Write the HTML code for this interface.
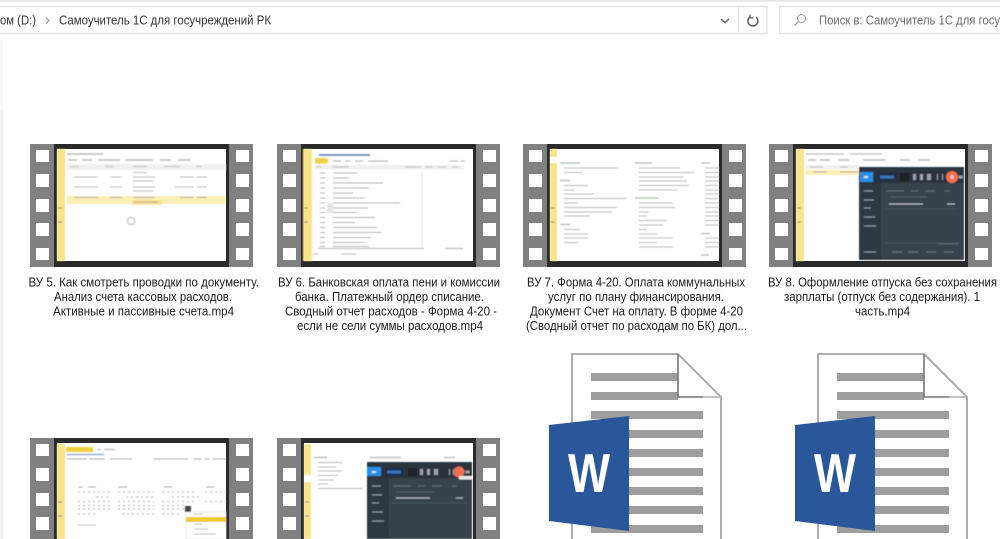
<!DOCTYPE html>
<html lang="ru">
<head>
<meta charset="utf-8">
<title>Самоучитель 1С для госучреждений РК</title>
<style>
html,body{margin:0;padding:0;background:#fff;width:1000px;height:539px;overflow:hidden}
svg{display:block;position:absolute;left:0;top:0}
text{font-family:"Liberation Sans","DejaVu Sans",sans-serif}
.t{font-size:13.2px;fill:#1c1c1c}
.b{font-size:13px;fill:#333}
.s{font-size:13px;fill:#6a6a6a}
</style>
</head>
<body>
<svg width="1000" height="539" viewBox="0 0 1000 539" xmlns="http://www.w3.org/2000/svg">
<defs>
<filter id="bl" x="-5%" y="-5%" width="110%" height="110%"><feGaussianBlur stdDeviation="0.65"/></filter>
<filter id="bs" x="-5%" y="-5%" width="110%" height="110%"><feGaussianBlur stdDeviation="0.28"/></filter>
<g id="film">
<rect x="0" y="0" width="223" height="123" fill="#808080"/>
<rect x="24" y="0" width="175" height="123" fill="#2a2a2a"/>
<path fill="#fff" d="M6 6h13v12H6zM6 30h13v13H6zM6 55h13v13H6zM6 79h13v13H6zM6 104h13v12H6zM206 6h13v12h-13zM206 30h13v13h-13zM206 55h13v13h-13zM206 79h13v13h-13zM206 104h13v12h-13z"/>
<rect x="27" y="5" width="169" height="112" fill="#fff"/>
</g>
<g id="doc">
<path d="M0 0H106L149 43V190H0Z" fill="#fff"/>
<path d="M19 19h87v8H19zM19 38h87v8H19zM19 57h112v8H19zM19 76h112v8H19zM19 95h112v8H19zM19 114h112v8H19zM19 133h112v8H19zM19 152h112v8H19zM19 171h112v8H19z" fill="#9e9e9e"/>
<path d="M0 190V0H106L149 43V190" fill="none" stroke="#aeaeae" stroke-width="2"/>
<path d="M106 0V43H131" fill="none" stroke="#777" stroke-width="1.6"/>
<path d="M131 43H149" fill="none" stroke="#aeaeae" stroke-width="1.6"/>
<path d="M-23 71L57 62V177L-23 167Z" fill="#2b579a"/>
</g>
</defs>

<!-- toolbar -->
<rect x="0" y="0" width="1000" height="1.5" fill="#e4e4e4"/>
<rect x="-2" y="6.5" width="769" height="27" fill="#fff" stroke="#e3e3e3" stroke-width="1.5"/>
<rect x="779.5" y="6.5" width="240" height="27" fill="#fff" stroke="#e3e3e3" stroke-width="1.5"/>
<rect x="738" y="7" width="1" height="26" fill="#e3e3e3"/>
<g filter="url(#bs)">
<text class="b" x="0" y="24.5" textLength="36" lengthAdjust="spacingAndGlyphs">ом (D:)</text>
<path d="M46 17.5l3 3-3 3" fill="none" stroke="#aaa" stroke-width="1.3"/>
<text class="b" x="59" y="24.5" textLength="212" lengthAdjust="spacingAndGlyphs">Самоучитель 1С для госучреждений РК</text>
<path d="M721 19l4 3.6 4-3.6" fill="none" stroke="#666" stroke-width="1.5"/>
<path d="M750.5 16.6a5 5 0 1 0 5.6 0.6" fill="none" stroke="#555" stroke-width="1.4"/>
<path d="M750 14.5v3.4h3.4" fill="none" stroke="#555" stroke-width="1.2"/>
<circle cx="801.5" cy="18.5" r="4" fill="none" stroke="#999" stroke-width="1"/>
<path d="M798.6 21.5l-4.2 4.2" stroke="#999" stroke-width="1.1"/>
<text class="s" x="819" y="24.5" textLength="181" lengthAdjust="spacingAndGlyphs">Поиск в: Самоучитель 1С для госу</text>
</g>

<!-- left edge -->
<rect x="0" y="40" width="3" height="70" fill="#f8f8f8"/>
<rect x="0" y="110" width="3" height="429" fill="#f0f0f0"/>

<!-- films -->
<use href="#film" x="30" y="144" filter="url(#bs)"/>
<use href="#film" x="277" y="144" filter="url(#bs)"/>
<use href="#film" x="523" y="144" filter="url(#bs)"/>
<use href="#film" x="769" y="144" filter="url(#bs)"/>
<use href="#film" x="30" y="438" filter="url(#bs)"/>
<use href="#film" x="277" y="438" filter="url(#bs)"/>

<!-- thumb 1 -->
<g filter="url(#bl)">
<rect x="57" y="149" width="8" height="112" fill="#f8e48a"/>
<path d="M58 208h4M58 222h4" stroke="#777" stroke-width="1"/>
<path d="M67 154h36" stroke="#bbb" stroke-width="1.4"/>
<path d="M68 160h9M82 160h10M98 160h22M125 160h28M160 160h11M178 160h13" stroke="#bbb" stroke-width="1.5"/>
<rect x="67" y="164" width="159" height="6" fill="#f0f0f0"/>
<path d="M70 166.500h9M105 166.500h8M133 166.500h14M164 166.500h16M196 166.500h6" stroke="#bbb" stroke-width="1"/>
<path d="M133 172.500h14M74 177h24M110 177h12M133 177h22M180 177h14M197 177h10M133 181h20M74 187h24M110 187h12M133 187h22M175 187h19M197 187h10M133 191h20" stroke="#bbb" stroke-width="1.1"/>
<rect x="67" y="196" width="158" height="8" fill="#fdeeb5"/>
<rect x="132" y="200" width="30" height="4.500" fill="#f9df86"/>
<path d="M74 197.500h24M110 197.500h12M133 197.500h22M180 197.500h14M197 197.500h10M134 202h24" stroke="#aaa" stroke-width="1.1"/>
<circle cx="131" cy="221" r="3.600" fill="none" stroke="#cfcfcf" stroke-width="1.500"/>
</g>

<!-- thumb 2 -->
<g filter="url(#bl)">
<rect x="303" y="149" width="9" height="112" fill="#f8e48a"/>
<path d="M304 208h4M304 222h4" stroke="#777" stroke-width="1"/>
<path d="M319 155h51" stroke="#7d95c0" stroke-width="2"/>
<rect x="315" y="158" width="13" height="5.500" fill="#efd145"/>
<path d="M333 161h8M345 161h5M355 161h8M368 161h20M450 161h8M461 161h4" stroke="#bbb" stroke-width="1.200"/>
<rect x="315" y="165" width="149" height="4.500" fill="#f0f0f0"/>
<path d="M316 167h5M333 167h16M405 167h16M425 167h8M438 167h8M452 167h6" stroke="#bbb" stroke-width="1"/>
<path d="M320 173h5M333 173h24M320 178h5M333 178h16M320 183h5M333 183h50M320 188h5M333 188h36M320 193h5M333 193h20M320 198h5M333 198h32M320 203h5M333 203h67M320 208h5M333 208h35M320 212.500h5M333 212.500h24M320 217.500h5M333 217.500h42M320 222.500h5M333 222.500h22M320 227.500h5M333 227.500h44M320 232.500h5M333 232.500h48M320 237.500h5M333 237.500h38M320 242.500h5M333 242.500h32M320 246.500h5M333 246.500h36" stroke="#b5b5b5" stroke-width="1.100"/>
<path d="M422 173v74" stroke="#e4e4e4" stroke-width="1"/>
<rect x="327" y="203" width="6" height="10" fill="#e6e6e6"/>
<path d="M318 248.500h106" stroke="#c4c4c4" stroke-width="1.200"/>
<path d="M445 248.500h18" stroke="#bbb" stroke-width="1.200"/>
<path d="M313 254h5M341 254h15" stroke="#bbb" stroke-width="1"/>
</g>

<!-- thumb 3 -->
<g filter="url(#bl)">
<rect x="550" y="149" width="7" height="112" fill="#f8e48a"/>
<rect x="550" y="157" width="7" height="6" fill="#fff"/>
<path d="M551 208h4M551 222h4" stroke="#777" stroke-width="1"/>
<path d="M560 163h20M560 180.500h10M560 224.500h10" stroke="#adbcae" stroke-width="1.200"/>
<path d="M564 168h54M564 172.500h18M564 185.500h24M564 190h10M564 194h30M564 198.500h62M564 203h14M564 207.500h53M564 212h48M564 216h26M564 229.500h16M564 234h24M564 238h24M564 242.500h14" stroke="#bababa" stroke-width="1.100"/>
<path d="M635 163h17M635 198h24" stroke="#adbcae" stroke-width="1.200"/>
<path d="M639 168h41M639 172.500h55M639 177h44M639 181h48M639 185.500h50M639 190h38M639 203h34M639 207.500h36M639 212h10M639 216h8M639 220.500h28M639 225h24M639 229.500h8M639 234h18M639 238h34M639 242.500h18M639 247h34" stroke="#bababa" stroke-width="1.100"/>
<path d="M701 163h9M701 233.500h9M701 255h8" stroke="#adbcae" stroke-width="1.200"/>
<path d="M705 168h14M705 172.500h14M705 177h14M705 181h14M705 185.500h14M705 190h14M705 194h14M705 198.500h14M705 203h14M705 207.500h14M705 212h14M705 216h14M705 220.500h14M705 225h14M705 238h14M705 242.500h14M705 247h14" stroke="#bababa" stroke-width="1.100"/>
</g>

<!-- thumb 4 -->
<g filter="url(#bl)">
<rect x="796" y="149" width="8" height="112" fill="#f8e48a"/>
<path d="M797 208h4M797 222h4" stroke="#777" stroke-width="1"/>
<path d="M806 154h38M850 154h32" stroke="#bbb" stroke-width="1.300"/>
<path d="M808 160h8M820 160h10M838 160h11M863 160h22M900 160h10M918 160h12" stroke="#bbb" stroke-width="1.500"/>
<rect x="806" y="165" width="53" height="4" fill="#f0f0f0"/>
<path d="M810 167h13M840 167h8" stroke="#bbb" stroke-width="1"/>
<rect x="806" y="170" width="53" height="5" fill="#fdeeb5"/>
<path d="M813 172h14M840 172h18" stroke="#aaa" stroke-width="1.100"/>
<rect x="859" y="167" width="105" height="93" fill="#38424c"/>
<rect x="859" y="167" width="105" height="5" fill="#2c343c"/>
<rect x="859" y="172" width="105" height="11" fill="#2a323a"/>
<rect x="860" y="172" width="13" height="10" fill="#2b8fe8"/>
<path d="M864 176h4v2h-4z" fill="#cfe6fa"/>
<rect x="878" y="173" width="18" height="8" fill="#1c2f4d"/>
<path d="M880 177h14" stroke="#3f70b8" stroke-width="3"/>
<rect x="900" y="173" width="9" height="8" fill="#1c2126"/>
<path d="M913 174h3v6h-3zM920 174h3v6h-3zM927 174h4v6h-4zM937 174h1v6h-1zM942 174h1v6h-1z" fill="#9aa2a9"/>
<circle cx="952" cy="177" r="6" fill="#ed6f55"/>
<circle cx="952" cy="177" r="2" fill="#f6b9a6"/>
<path d="M958.500 177h4" stroke="#9aa2a9" stroke-width="3"/>
<rect x="859" y="183" width="22" height="77" fill="#2e3740"/>
<path d="M864 191h9M864 200h10M864 208h7M864 217h11M864 226h12M864 252h12" stroke="#8d969e" stroke-width="1.200"/>
<path d="M886 191h18M911 191h7M925 191h10M945 191h5" stroke="#5f6a74" stroke-width="1.200"/>
<path d="M889 197h38" stroke="#57626c" stroke-width="1"/>
<path d="M889 204h34M947 204h8" stroke="#b4bac0" stroke-width="1.300"/>
<path d="M884 209h75M884 243h75" stroke="#47525c" stroke-width="1"/>
<path d="M938 244h20" stroke="#5f6a74" stroke-width="1"/>
<path d="M892 252h10M908 252h10M926 252h10M944 252h10" stroke="#66717b" stroke-width="1.500"/>
</g>

<!-- thumb 5 -->
<g filter="url(#bl)">
<rect x="57" y="444" width="8" height="95" fill="#f8e48a"/>
<path d="M58 502h4M58 516h4" stroke="#777" stroke-width="1"/>
<rect x="66" y="447" width="27" height="5" fill="#efd145"/>
<path d="M97 449.500h4M104 449.500h11" stroke="#bbb" stroke-width="1.300"/>
<path d="M67 454.500h37" stroke="#8ba4ca" stroke-width="1.200"/>
<path d="M67 459h20M89 459h16M110 459h22M154 459h34M194 459h8M205 459h5M213 459h4M216 459h10" stroke="#bbb" stroke-width="1.200"/>
<path d="M78 487h5M88 487h8M118 487h9M164 487h8M206 487h8" stroke="#aaa" stroke-width="1.100"/>
<path d="M78 492h32M118 492h36M162 492h34M205 492h21M96 497h14M126 497h28M172 497h30M78 501.500h32M118 501.500h36M162 501.500h34M205 501.500h21" stroke="#bdbdbd" stroke-width="1.200" stroke-dasharray="2 3"/>
<path d="M78 505.500h32M118 505.500h36M162 505.500h22M78 509h32M118 509h36M162 509h22M78 514h18M122 514h32M162 514h18" stroke="#bdbdbd" stroke-width="1.200" stroke-dasharray="2 3"/>
<rect x="185" y="506" width="6" height="6" fill="#444"/>
<rect x="186" y="512" width="40" height="27" fill="#fff" stroke="#ddd" stroke-width="0.600"/>
<path d="M194 514h9M194 524h8M194 529h14M194 534h22" stroke="#bbb" stroke-width="1"/>
<rect x="186" y="517" width="40" height="5" fill="#f0c92e"/>
<path d="M78 525h18" stroke="#c4c4c4" stroke-width="1"/>
</g>

<!-- thumb 6 -->
<g filter="url(#bl)">
<rect x="304" y="444" width="7" height="95" fill="#f8e48a"/>
<rect x="304" y="475" width="7" height="7" fill="#fff"/>
<path d="M305 502h4M305 516h4" stroke="#777" stroke-width="1"/>
<path d="M314 457.500h13M370 457.500h31M444 457.500h11" stroke="#adbcae" stroke-width="1.200"/>
<path d="M318 462.500h24M318 467h18M318 471h24M318 475.500h20M318 480h16M318 484h10M318 488.500h45" stroke="#bababa" stroke-width="1.100"/>
<rect x="367" y="462" width="105" height="77" fill="#38424c"/>
<rect x="367" y="462" width="105" height="5" fill="#2c343c"/>
<rect x="367" y="467" width="105" height="11" fill="#2a323a"/>
<rect x="367" y="467" width="14" height="9" fill="#2b8fe8"/>
<path d="M372 471h4v2h-4z" fill="#cfe6fa"/>
<rect x="385" y="468" width="18" height="8" fill="#1c2f4d"/>
<path d="M387 472h14" stroke="#3f70b8" stroke-width="3"/>
<rect x="408" y="468" width="9" height="8" fill="#1c2126"/>
<path d="M420 469h3v6h-3zM427 469h3v6h-3zM434 469h4v6h-4zM449 469h1v6h-1zM453 469h1v6h-1z" fill="#9aa2a9"/>
<circle cx="459" cy="472" r="5.500" fill="#ed6f55"/>
<path d="M465.500 472h4" stroke="#9aa2a9" stroke-width="3"/>
<rect x="459" y="476" width="13" height="3.500" fill="#e8e8e8"/>
<rect x="367" y="478" width="22" height="61" fill="#2e3740"/>
<path d="M372 486h9M372 495h10M372 503h7M372 512h11M372 521h12" stroke="#8d969e" stroke-width="1.200"/>
<path d="M393 486h18M418 486h7M432 486h10M452 486h5" stroke="#5f6a74" stroke-width="1.200"/>
<path d="M396 492h38" stroke="#57626c" stroke-width="1"/>
<path d="M396 498h34M456 498h7" stroke="#b4bac0" stroke-width="1.300"/>
<path d="M391 503h76" stroke="#47525c" stroke-width="1"/>
</g>

<!-- word icons -->
<g filter="url(#bs)">
<use href="#doc" x="572" y="354"/>
<use href="#doc" x="818" y="354"/>
<text x="568" y="492" font-size="55" font-weight="700" fill="#fff" textLength="42" lengthAdjust="spacingAndGlyphs">W</text>
<text x="814" y="492" font-size="55" font-weight="700" fill="#fff" textLength="42" lengthAdjust="spacingAndGlyphs">W</text>
</g>

<!-- captions -->
<g filter="url(#bs)">
<text class="t" x="28.500" y="286.500" textLength="230.500" lengthAdjust="spacingAndGlyphs">ВУ 5. Как смотреть проводки по документу.</text>
<text class="t" x="54" y="301" textLength="178" lengthAdjust="spacingAndGlyphs">Анализ счета кассовых расходов.</text>
<text class="t" x="53" y="315.500" textLength="181" lengthAdjust="spacingAndGlyphs">Активные и пассивные счета.mp4</text>

<text class="t" x="278" y="286.500" textLength="222" lengthAdjust="spacingAndGlyphs">ВУ 6. Банковская оплата пени и комиссии</text>
<text class="t" x="295" y="301" textLength="189" lengthAdjust="spacingAndGlyphs">банка. Платежный ордер списание.</text>
<text class="t" x="285" y="315.500" textLength="212" lengthAdjust="spacingAndGlyphs">Сводный отчет расходов - Форма 4-20 -</text>
<text class="t" x="297" y="330" textLength="186" lengthAdjust="spacingAndGlyphs">если не сели суммы расходов.mp4</text>

<text class="t" x="527" y="286.500" textLength="218" lengthAdjust="spacingAndGlyphs">ВУ 7. Форма 4-20. Оплата коммунальных</text>
<text class="t" x="548" y="301" textLength="176" lengthAdjust="spacingAndGlyphs">услуг по плану финансирования.</text>
<text class="t" x="530" y="315.500" textLength="213" lengthAdjust="spacingAndGlyphs">Документ Счет на оплату. В форме 4-20</text>
<text class="t" x="526" y="330" textLength="221" lengthAdjust="spacingAndGlyphs">(Сводный отчет по расходам по БК) дол...</text>

<text class="t" x="768" y="286.500" textLength="229" lengthAdjust="spacingAndGlyphs">ВУ 8. Оформление отпуска без сохранения</text>
<text class="t" x="784" y="301" textLength="196" lengthAdjust="spacingAndGlyphs">зарплаты (отпуск без содержания). 1</text>
<text class="t" x="855" y="315.500" textLength="55" lengthAdjust="spacingAndGlyphs">часть.mp4</text>
</g>
</svg>
</body>
</html>
